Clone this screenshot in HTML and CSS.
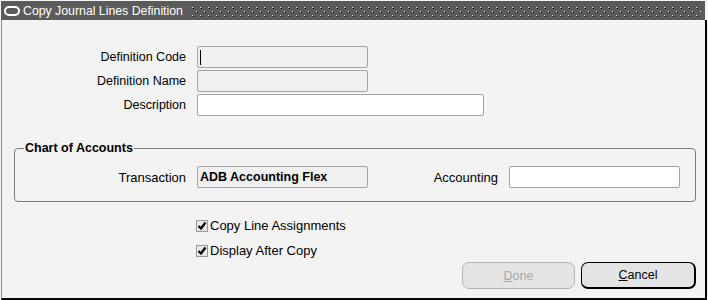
FILE: index.html
```html
<!DOCTYPE html>
<html>
<head>
<meta charset="utf-8">
<title>Copy Journal Lines Definition</title>
<link rel="stylesheet" href="styles.css">
</head>
<body>
<div class="window">
  <div class="titlebar">
    <svg class="logo" width="16" height="10" viewBox="0 0 16 10"><rect x="1" y="1" width="14" height="8" rx="4" ry="4" fill="none" stroke="#fff" stroke-width="2"/></svg>
    <span class="title">Copy Journal Lines Definition</span>
    <svg class="grip" height="12" preserveAspectRatio="none">
      <defs>
        <pattern id="dots" width="8" height="8" patternUnits="userSpaceOnUse">
          <rect x="1" y="1" width="1" height="1" fill="#e6e6e6"/>
          <rect x="2" y="2" width="1" height="1" fill="#000"/>
          <rect x="5" y="5" width="1" height="1" fill="#e6e6e6"/>
          <rect x="6" y="6" width="1" height="1" fill="#000"/>
        </pattern>
      </defs>
      <rect width="100%" height="100%" fill="url(#dots)"/>
    </svg>
  </div>
  <div class="content">
    <div class="fields">
      <label class="lbl">Definition Code</label>
      <div class="input ro short"><span class="caret"></span></div>
      <label class="lbl">Definition Name</label>
      <div class="input ro short"></div>
      <label class="lbl">Description</label>
      <div class="input long"></div>
    </div>
    <fieldset class="group">
      <legend>Chart of Accounts</legend>
      <div class="group-row">
        <label class="lbl wide">Transaction</label>
        <div class="input ro bold">ADB Accounting Flex</div>
        <label class="lbl wide">Accounting</label>
        <div class="input"></div>
      </div>
    </fieldset>
    <div class="checks">
      <div class="check"><span class="box"><svg width="10" height="10" viewBox="0 0 10 10"><path d="M1.5 5 L4 7.5 L8.5 1.5" fill="none" stroke="#000" stroke-width="2.2"/></svg></span>Copy Line Assignments</div>
      <div class="check"><span class="box"><svg width="10" height="10" viewBox="0 0 10 10"><path d="M1.5 5 L4 7.5 L8.5 1.5" fill="none" stroke="#000" stroke-width="2.2"/></svg></span>Display After Copy</div>
    </div>
    <div class="buttons">
      <button class="btn disabled"><u>D</u>one</button>
      <button class="btn default"><u>C</u>ancel</button>
    </div>
  </div>
</div>
</body>
</html>
```
FILE: styles.css
```css
html, body {
  margin: 0;
  padding: 0;
  background: #f4f4f4;
}
body {
  font-family: "Liberation Sans", Arial, sans-serif;
  font-size: 12.5px;
  color: #000;
}
.window {
  width: 707px;
  height: 300px;
  box-sizing: border-box;
  padding: 1px 0 0 1px;
  display: flex;
  flex-direction: column;
}
.titlebar {
  height: 19px;
  background: #5b5b5b;
  display: flex;
  align-items: center;
  padding-left: 3px;
  margin-right: 2px;
}
.logo {
  flex: none;
  margin-top: 1px;
}
.title {
  color: #fff;
  margin-left: 3px;
  white-space: nowrap;
  line-height: 14px;
  font-size: 12.3px;
}
.grip {
  flex: 1;
  margin-left: 8px;
  margin-right: 4px;
  height: 12px;
  margin-top: 2px;
}
.content {
  flex: 1;
  border-left: 1px solid #8c8c8c;
  border-right: 2px solid #000;
  border-bottom: 2px solid #000;
  background: #f3f3f3;
  display: flex;
  flex-direction: column;
}
.lbl {
  text-align: right;
  white-space: nowrap;
}
.lbl.wide {
  font-size: 13px;
}
.fields {
  display: grid;
  grid-template-columns: 184px auto;
  column-gap: 11px;
  row-gap: 2px;
  align-items: center;
  justify-content: start;
  margin-top: 26px;
}
.input {
  box-sizing: border-box;
  height: 22px;
  border: 1px solid #a4a4a4;
  border-radius: 2px;
  background: #fff;
  width: 171px;
  display: flex;
  align-items: center;
  padding-left: 2px;
}
.input.ro {
  background: #f0f0f0;
}
.input.long {
  width: 287px;
}
.input.bold {
  font-weight: bold;
  font-size: 12.5px;
}
.caret {
  width: 1px;
  height: 15px;
  background: #000;
}
.group {
  margin: 25px 9px 0 12px;
  padding: 0 0 13px 0;
  border: 1px solid #7c7c7c;
  border-radius: 4px;
}
.group legend {
  font-weight: bold;
  padding: 0 1px;
  margin-left: 9px;
  line-height: 14px;
}
.group-row {
  display: grid;
  grid-template-columns: 171px 171px 119px 171px;
  column-gap: 11px;
  align-items: center;
  margin-top: 11px;
}
.checks {
  display: flex;
  flex-direction: column;
  gap: 11px;
  margin: 17px 0 0 194px;
  font-size: 13px;
}
.check {
  display: flex;
  align-items: center;
  height: 14px;
  line-height: 14px;
}
.box {
  box-sizing: border-box;
  width: 12px;
  height: 12px;
  border: 1px solid #9a9a9a;
  background: #e8e8e8;
  margin-right: 2px;
  display: flex;
  align-items: center;
  justify-content: center;
}
.buttons {
  display: flex;
  justify-content: flex-end;
  gap: 6px;
  margin: 4px 9px 0 0;
}
.btn {
  font-family: "Liberation Sans", Arial, sans-serif;
  font-size: 12.5px;
  width: 114px;
  height: 27px;
  box-sizing: border-box;
  border-radius: 7px;
  padding: 0;
  background: #e4e4e4;
}
.btn.disabled {
  border: 1px solid #b4b4b4;
  color: #a8a8a8;
  width: 113px;
}
.btn.default {
  border: 1px solid #000;
  border-right-width: 2px;
  border-bottom-width: 2px;
  color: #000;
  width: 115px;
}
```
